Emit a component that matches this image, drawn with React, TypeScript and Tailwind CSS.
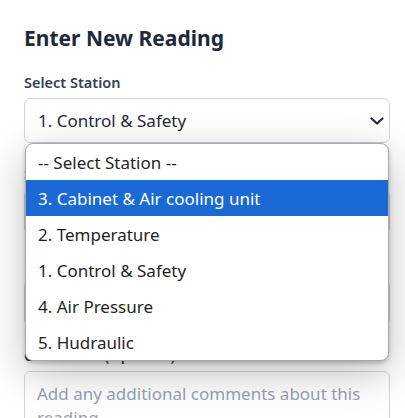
import React from 'react';

const stations = [
  '-- Select Station --',
  '3. Cabinet & Air cooling unit',
  '2. Temperature',
  '1. Control & Safety',
  '4. Air Pressure',
  '5. Hudraulic',
];

const Chevron = () => (
  <svg width="14" height="8" viewBox="0 0 14 8" fill="none" stroke="#1f2937" strokeWidth="2.2" strokeLinecap="round" strokeLinejoin="round">
    <path d="M1.5 1.5 7 6.5 12.5 1.5" />
  </svg>
);

export default function App() {
  return (
    <div className="h-screen overflow-hidden bg-white pt-6 pl-6 pr-[15px] font-['Noto_Sans',sans-serif] text-gray-800">
      <h2 className="text-[21px] font-bold text-gray-800 mb-5 leading-7">Enter New Reading</h2>

      <div className="relative space-y-5">
        <div>
          <label className="block text-[14.5px] font-semibold text-gray-700 mb-1.5 leading-5">Select Station</label>
          <div className="relative">
            <div className="h-[45px] w-full flex items-center justify-between rounded-md border border-gray-300 bg-white pl-[13px] pr-[5px] text-[17px] text-gray-800">
              <span>1. Control &amp; Safety</span>
              <Chevron />
            </div>

            {/* open native dropdown */}
            <div className="absolute left-px right-px top-[45px] z-10 overflow-hidden rounded-lg border border-[#a8a8a8] bg-white shadow-[0_2px_4px_rgba(0,0,0,0.22),0_12px_40px_rgba(0,0,0,0.25)]">
              {stations.map((s, i) => (
                <div
                  key={s}
                  className={`h-9 flex items-center px-3 pt-[2px] text-[17px] ${i === 1 ? 'bg-[#1a69d4] text-white' : 'text-[#1f1f1f]'}`}
                >
                  {s}
                </div>
              ))}
            </div>
          </div>
        </div>

        <div>
          <label className="block text-[14.5px] font-semibold text-gray-700 mb-1.5 leading-5">Select Parameter</label>
          <div className="h-[45px] w-full rounded-md border border-gray-300 bg-white" />
        </div>

        <div>
          <label className="block text-[14.5px] font-semibold text-gray-700 mb-1.5 leading-5">Reading Value</label>
          <div className="h-[45px] w-full rounded-md border border-gray-300 bg-white" />
        </div>

        <div>
          <label className="block text-[14.5px] font-semibold text-gray-700 mb-1.5 leading-5">Comments (Optional)</label>
          <textarea
            rows={3}
            placeholder="Add any additional comments about this reading..."
            className="block w-full resize-none rounded-md border border-gray-300 bg-white px-3 py-2.5 text-[17px] leading-6 placeholder:text-gray-400 outline-none"
          />
        </div>
      </div>
    </div>
  );
}
